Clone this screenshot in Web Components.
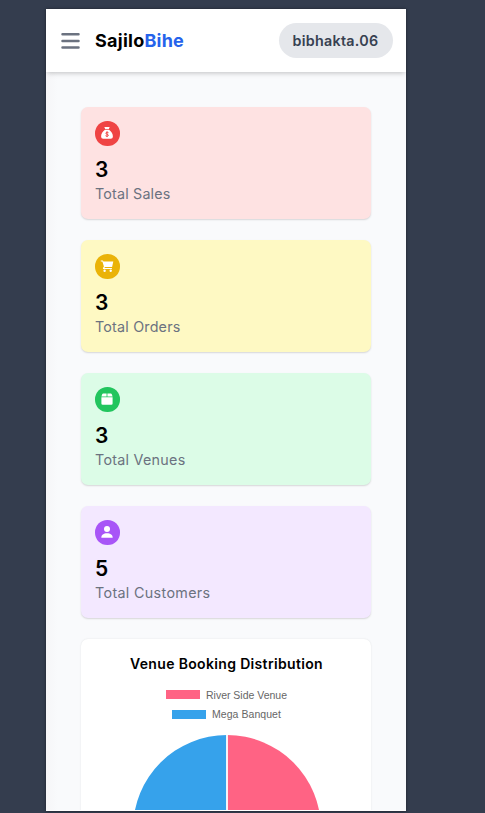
<!DOCTYPE html>
<html lang="en">
<head>
<meta charset="utf-8">
<title>SajiloBihe</title>
<style>
html,body{margin:0;height:100%;overflow:hidden}
body{background:#343d4e;font-family:Inter,"Open Sans","Liberation Sans",sans-serif;color:#000}
</style>
</head>
<body>
<dashboard-app></dashboard-app>
<script>
// Text run whose letter spacing is adjusted to fill a given width.
class FitText extends HTMLElement{
  connectedCallback(){
    this.attachShadow({mode:'open'}).innerHTML='<style>:host{display:inline-block;white-space:nowrap}</style><slot></slot>';
    requestAnimationFrame(()=>this.fit());
    this.fit();
  }
  fit(){
    this.style.width='auto';this.style.letterSpacing='0px';
    const w=this.getBoundingClientRect().width,t=+this.getAttribute('width'),n=this.textContent.length;
    if(!w||!n)return;
    this.style.letterSpacing=((t-w)/n)+'px';
    this.style.width=t+'px';
  }
}
customElements.define('fit-text',FitText);

class TopBar extends HTMLElement{
  constructor(){super();this.attachShadow({mode:'open'}).innerHTML=`<style>
  :host{display:flex;align-items:center;box-sizing:border-box;height:63px;padding:0 13.5px 0 15px;background:#fff;box-shadow:0 3px 5px -1px rgba(0,0,0,.13),0 2px 4px -2px rgba(0,0,0,.12);position:relative}
  svg{display:block;width:19px;height:18px}
  .brand{margin-left:15px;font-size:18px;line-height:24px;font-weight:700;display:flex}
  .blue{color:#2563eb}
  .user{margin-left:auto;height:35px;width:114px;display:flex;align-items:center;justify-content:center;border-radius:18px;background:#e5e7eb;color:#374151;font-size:14.3px;font-weight:600}
  </style>
  <svg viewBox="0 0 19 18" stroke="#6b7280" stroke-width="2.5" stroke-linecap="round"><path d="M1.500 2.200h16M1.500 8.900h16M1.500 15.500h16"/></svg>
  <div class="brand"><fit-text width="49.5">Sajilo</fit-text><fit-text class="blue" width="39.5">Bihe</fit-text></div>
  <div class="user"><fit-text width="86">bibhakta.06</fit-text></div>`}
}
customElements.define('top-bar',TopBar);

const icons={
 sales:'<path d="M4.3 1h5.4L8.8 3H5.2z"/><path d="M5 3.7h4c2 1.4 3.9 3.8 3.9 6.5 0 1.700-.8 2.500-2.300 2.500H3.400c-1.500 0-2.300-.8-2.300-2.500C1.100 7.500 3 5.100 5 3.700z"/><path d="M8.500 6.700C8 6.100 5.900 6 5.800 7.200c0 1.200 2.600.8 2.600 2.100 0 1.200-2.100 1.200-2.900.4M7 5.300v5.800" fill="none" stroke="#ef4444" stroke-width=".95"/>',
 orders:'<path d="M.8 1.500h2.100l.5 1.100h9.900l-1.200 5.500H4.900l-.5 1h7.500v1H3.700c-.8 0-1-.7-.6-1.400l.8-1.200L2.400 2.500H.8z"/><circle cx="4.600" cy="11.700" r="1.200"/><circle cx="10.700" cy="11.700" r="1.200"/>',
 venues:'<path d="M3.200 1.400h3.400v3H1.400l.8-2.200q.3-.8 1-.8zM7.400 1.400h3.400q.7 0 1 .8l.8 2.200H7.400zM1.400 5.200h11.200v6.200q0 1.300-1.300 1.300H2.700q-1.300 0-1.300-1.300z"/>',
 customers:'<circle cx="7" cy="4" r="3"/><path d="M1.300 12.700c0-2.800 2.300-4.500 5.700-4.500s5.700 1.700 5.700 4.500z"/>'
};
class StatCard extends HTMLElement{
  constructor(){super();this.attachShadow({mode:'open'}).innerHTML=`<style>
  :host{display:block;box-sizing:border-box;height:112px;padding:14px;border-radius:7px;background:var(--bg);box-shadow:0 1px 2px rgba(0,0,0,.13),0 1px 2px -1px rgba(0,0,0,.07)}
  .icon{width:24.5px;height:24.5px;border-radius:50%;background:var(--accent);display:grid;place-items:center;margin-bottom:10.5px}
  svg{width:14px;height:14px;fill:#fff}
  .value{font-size:21px;font-weight:600;line-height:28px}
  .label{font-size:14.300px;line-height:20.500px;color:#6b7280;height:21px}
  </style><div class="icon"><svg viewBox="0 0 14 14">${icons[this.getAttribute('icon')]}</svg></div>
  <div class="value"><slot name="value"></slot></div><div class="label"><slot></slot></div>`}
}
customElements.define('stat-card',StatCard);

class BookingChart extends HTMLElement{
  constructor(){super();this.attachShadow({mode:'open'}).innerHTML=`<style>
  :host{display:block;box-sizing:border-box;height:330px;padding:13.5px 0 0 1px;border-radius:7px;background:#fff;box-shadow:0 0 2px rgba(0,0,0,.1)}
  h2{margin:0;font-size:14px;line-height:21px;height:21px;font-weight:600;text-align:center}
  .legend{display:grid;justify-items:center;row-gap:7px;margin-top:15px;font:10.500px/12.500px "Liberation Sans",Arial,sans-serif;color:#666}
  .row{display:flex;align-items:center;gap:6px}
  i{display:block;width:34px;height:9px}
  svg{display:block;width:190px;height:190px;margin:13px auto 0}
  </style>
  <h2><fit-text width="193">Venue Booking Distribution</fit-text></h2>
  <div class="legend"><div class="row"><i style="background:#ff6384"></i><fit-text width="81">River Side Venue</fit-text></div>
  <div class="row"><i style="background:#36a2eb"></i><fit-text width="69">Mega Banquet</fit-text></div></div>
  <svg viewBox="0 0 190 190"><path d="M95 1a94 94 0 0 1 0 188z" fill="#ff6384"/><path d="M95 1a94 94 0 0 0 0 188z" fill="#36a2eb"/><path d="M95 0v190" stroke="#fff" stroke-width="1.800"/></svg>`}
}
customElements.define('booking-chart',BookingChart);

class DashboardApp extends HTMLElement{
  constructor(){super();this.attachShadow({mode:'open'}).innerHTML=`<style>
  :host{display:block;padding:9px 0 0 46px}
  .frame{width:360px;height:801px;overflow:hidden;background:linear-gradient(90deg,#f6f6f8,#f9fafc 12px);border-bottom:1px solid #fff;box-shadow:0 0 3px rgba(0,0,0,.45)}
  main{padding:35px 35px 0;display:grid;gap:21px}
  </style>
  <div class="frame"><top-bar></top-bar><main>
  <stat-card icon="sales" style="--bg:#fee2e2;--accent:#ef4444"><span slot="value">3</span><fit-text width="75.5">Total Sales</fit-text></stat-card>
  <stat-card icon="orders" style="--bg:#fef9c3;--accent:#eab308"><span slot="value">3</span><fit-text width="85.5">Total Orders</fit-text></stat-card>
  <stat-card icon="venues" style="--bg:#dcfce7;--accent:#22c55e"><span slot="value">3</span><fit-text width="90.5">Total Venues</fit-text></stat-card>
  <stat-card icon="customers" style="--bg:#f3e8ff;--accent:#a855f7"><span slot="value">5</span><fit-text width="115.500">Total Customers</fit-text></stat-card>
  <booking-chart></booking-chart>
  </main></div>`}
}
customElements.define('dashboard-app',DashboardApp);
</script>
</body>
</html>
